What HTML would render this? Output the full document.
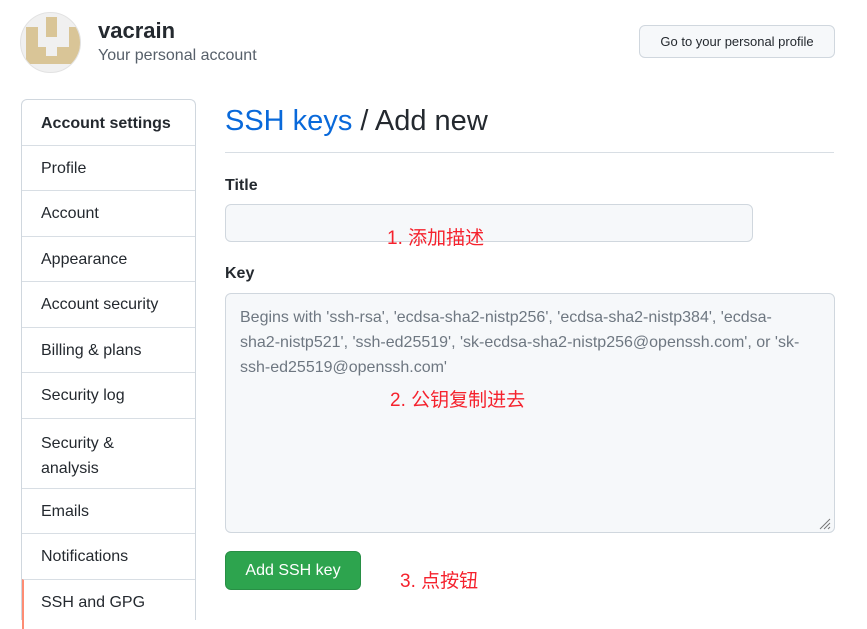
<!DOCTYPE html>
<html><head><meta charset="utf-8"><style>
body{margin:0;width:867px;height:604px;overflow:hidden;background:#fff;font-family:"Liberation Sans","Noto Sans CJK SC",sans-serif;color:#24292f;position:relative}
.a{position:absolute}
.nav{left:21px;top:99px;width:173px;height:520px;border:1px solid #d0d7de;border-radius:6px 6px 0 0;border-bottom:none}
.it{position:absolute;left:0;width:173px;border-top:1px solid #d8dee4;font-size:16px;padding-left:19px;box-sizing:border-box;line-height:22px}
.red{color:#f5222d;font-size:19px}
</style></head><body>
<div class="a" style="left:20px;top:12px;width:59px;height:59px;border-radius:50%;background:#f0f0f0;border:1px solid #e2e2e2;overflow:hidden">
<svg width="59" height="59" viewBox="0 0 59 59" fill="#d9c597"><rect x="5" y="14" width="12" height="37"/><rect x="48" y="14" width="12" height="37"/><rect x="5" y="34" width="55" height="17"/><rect x="25" y="4" width="11" height="20"/><rect x="25" y="24" width="11" height="19" fill="#f0f0f0"/></svg></div>
<div class="a" style="left:98px;top:18px;font-size:22px;font-weight:bold">vacrain</div>
<div class="a" style="left:98px;top:47px;font-size:16px;color:#57606a">Your personal account</div>
<div class="a" style="left:639px;top:25px;width:194px;height:31px;border:1px solid #d0d7de;border-radius:6px;background:#f6f8fa;font-size:13px;line-height:31px;text-align:center">Go to your personal profile</div>
<div class="a nav">
<div class="it" style="top:0;height:45px;border-top:none;font-weight:bold;line-height:47px">Account settings</div>
<div class="it" style="top:45px;height:45px;line-height:46px">Profile</div>
<div class="it" style="top:90px;height:46px;line-height:46px">Account</div>
<div class="it" style="top:136px;height:45px;line-height:46px">Appearance</div>
<div class="it" style="top:181px;height:46px;line-height:46px">Account security</div>
<div class="it" style="top:227px;height:45px;line-height:46px">Billing &amp; plans</div>
<div class="it" style="top:272px;height:46px;line-height:46px">Security log</div>
<div class="it" style="top:318px;height:70px;padding-top:12px;line-height:25px">Security &amp;<br>analysis</div>
<div class="it" style="top:388px;height:45px;line-height:46px">Emails</div>
<div class="it" style="top:433px;height:46px;line-height:46px">Notifications</div>
<div class="it" style="top:479px;height:50px;line-height:46px;border-left:2px solid #fd8c73;padding-left:17px">SSH and GPG</div>
</div>
<div class="a" style="left:225px;top:105px;font-size:29px"><span style="color:#0969da">SSH keys</span> / Add new</div>
<div class="a" style="left:225px;top:152px;width:609px;border-top:1px solid #d8dee4"></div>
<div class="a" style="left:225px;top:177px;font-size:16px;font-weight:bold">Title</div>
<div class="a" style="left:225px;top:204px;width:526px;height:36px;border:1px solid #d0d7de;border-radius:6px;background:#f6f8fa"></div>
<div class="a red" style="left:387px;top:223px">1. 添加描述</div>
<div class="a" style="left:225px;top:265px;font-size:16px;font-weight:bold">Key</div>
<div class="a" style="left:225px;top:293px;width:608px;height:238px;border:1px solid #d0d7de;border-radius:6px;background:#f6f8fa"></div>
<div class="a" style="left:240px;top:305px;width:560px;font-size:16px;line-height:25px;color:#6e7781">Begins with 'ssh-rsa', 'ecdsa-sha2-nistp256', 'ecdsa-sha2-nistp384', 'ecdsa-sha2-nistp521', 'ssh-ed25519', 'sk-ecdsa-sha2-nistp256@openssh.com', or 'sk-ssh-ed25519@openssh.com'</div>
<div class="a red" style="left:390px;top:385px">2. 公钥复制进去</div>
<svg class="a" style="left:818px;top:517px" width="13" height="13"><path d="M12 2L2 12M12 6L6 12M12 10L10 12" stroke="#777" stroke-width="1"/></svg>
<div class="a" style="left:225px;top:551px;width:134px;height:37px;background:#2da44e;border:1px solid #288f45;border-radius:6px;color:#fff;font-size:16px;line-height:38px;text-align:center">Add SSH key</div>
<div class="a red" style="left:400px;top:566px">3. 点按钮</div>
</body></html>
